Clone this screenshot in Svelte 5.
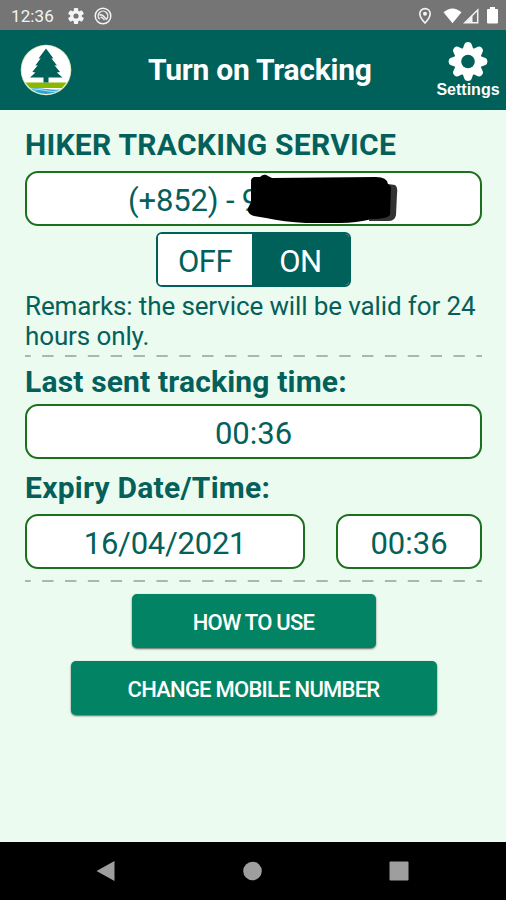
<script>
  let tracking = true;
  const countryCode = '(+852) - 9';
  const lastSent = '00:36';
  const expiryDate = '16/04/2021';
  const expiryTime = '00:36';

  const teeth = [0, 45, 90, 135, 180, 225, 270, 315];
</script>

<style>
  :global(body) {
    margin: 0;
    background: #ebfbef;
  }

  .screen {
    display: flex;
    flex-direction: column;
    width: 506px;
    height: 900px;
    overflow: hidden;
    background: #ebfbef;
    color: #04605a;
    font-family: Roboto, "Liberation Sans", sans-serif;
  }

  svg {
    display: block;
    flex: none;
  }

  .status {
    display: flex;
    align-items: center;
    height: 30px;
    padding: 1px 8px 0 11px;
    background: #757575;
    color: #f4f4f4;
    font-size: 17px;
    box-sizing: border-box;
  }

  .clock {
    width: 57px;
    letter-spacing: 0.1px;
  }

  .status-right {
    display: flex;
    align-items: center;
    margin-left: auto;
  }

  header {
    display: flex;
    align-items: center;
    height: 80px;
    padding-left: 20px;
    background: #00605a;
    color: #fff;
  }

  h1 {
    flex: 1;
    margin: 0 0 0 76px;
    font-size: 30px;
    line-height: 36px;
    font-weight: 700;
    letter-spacing: -0.25px;
    white-space: nowrap;
  }

  .settings {
    display: flex;
    flex-direction: column;
    align-items: center;
    width: 76px;
    font: 700 16px/18px "Liberation Sans", sans-serif;
  }

  main {
    flex: 1;
    display: flex;
    flex-direction: column;
    padding: 17px 24px 0 25px;
  }

  h2 {
    margin: 0;
    height: 44px;
    font-size: 30px;
    line-height: 36px;
    font-weight: 700;
    letter-spacing: 0.27px;
    white-space: nowrap;
  }

  h2.time {
    height: 40px;
    margin-top: 7px;
    letter-spacing: 0.17px;
  }

  h2.expiry {
    height: 44px;
    margin-top: 11px;
    letter-spacing: 0.25px;
  }

  .field {
    position: relative;
    display: flex;
    align-items: center;
    justify-content: center;
    height: 55px;
    padding-top: 3px;
    box-sizing: border-box;
    border: 2px solid #1c701c;
    border-radius: 13px;
    background: #fff;
    font-size: 31px;
  }

  .phone {
    justify-content: flex-start;
    padding-left: 101px;
    letter-spacing: -0.15px;
  }

  .redaction {
    position: absolute;
    left: 217px;
    top: 0;
    filter: blur(0.6px);
  }

  .toggle {
    display: flex;
    align-self: center;
    width: 195px;
    height: 55px;
    margin: 6px 0 4px;
    box-sizing: border-box;
    border: 2px solid #00605a;
    border-radius: 6px;
    overflow: hidden;
    background: #fff;
  }

  .toggle button {
    width: 94px;
    padding: 4px 0 0;
    border: 0;
    background: #fff;
    color: #00605a;
    font: 31px Roboto, sans-serif;
    letter-spacing: -0.5px;
  }

  .toggle button + button {
    flex: 1;
  }

  .toggle button.active {
    background: #00605a;
    color: #fff;
  }

  .remarks {
    margin: 0;
    height: 64px;
    font-size: 26px;
    line-height: 30px;
    letter-spacing: -0.12px;
    white-space: nowrap;
  }

  .row {
    display: flex;
    gap: 31px;
    margin-bottom: 11px;
  }

  .date {
    width: 280px;
    letter-spacing: -0.25px;
  }

  .hour {
    width: 146px;
  }

  .action {
    align-self: center;
    height: 54px;
    padding: 2px 0 0;
    border: 0;
    border-radius: 5px;
    background: #028464;
    box-shadow: 0 1px 2px rgba(0, 0, 0, 0.6);
    color: #fff;
    font: 500 22px Roboto, sans-serif;
    letter-spacing: -0.75px;
  }

  .how {
    width: 244px;
    margin-top: 12px;
  }

  .change {
    width: 366px;
    margin-top: 13px;
  }

  nav {
    display: flex;
    align-items: center;
    justify-content: space-between;
    height: 58px;
    padding: 0 97px 0 95px;
    box-sizing: border-box;
    background: #000;
  }
</style>

{#snippet divider()}
  <svg width="457" height="2" viewBox="0 0 457 2">
    <path d="M0 1H457" stroke="#a9b8ad" stroke-width="2" stroke-dasharray="11.4 11.45" stroke-dashoffset="5.7" />
  </svg>
{/snippet}

<div class="screen">
  <div class="status">
    <span class="clock">12:36</span>
    <svg width="16" height="18" viewBox="0 0 16 18">
      <g transform="translate(8 9)" fill="#f4f4f4">
        {#each [0, 60, 120] as angle}
          <rect x="-2.2" y="-8" width="4.4" height="16" rx="1" transform="rotate({angle})" />
        {/each}
        <circle r="5.7" />
        <circle r="2.6" fill="#757575" />
      </g>
    </svg>
    <svg width="18" height="18" viewBox="0 0 18 18" style:margin-left="10px" fill="none" stroke="#f4f4f4">
      <circle cx="9" cy="9" r="7.8" stroke-width="1.5" />
      <path d="M5.6 12.3A4.8 4.8 0 1 1 12.4 12.3" stroke-width="1.4" />
      <path d="M5.5 8.5C7.500 6.500 9 8.500 12.800 12.800M6.500 10.500C8 9.500 8.500 11 10.500 13" stroke-width="1.300" />
    </svg>
    <div class="status-right">
      <svg width="14" height="18" viewBox="0 0 14 18">
        <path d="M7 1.6C4 1.6 1.8 3.8 1.8 6.7 1.8 10.5 7 16 7 16s5.2-5.5 5.2-9.3C12.2 3.8 10 1.6 7 1.6Z" fill="none" stroke="#f4f4f4" stroke-width="1.6" />
        <circle cx="7" cy="6.7" r="2" fill="#f4f4f4" />
      </svg>
      <svg width="19" height="16" viewBox="0 0 19 16" style:margin-left="11px">
        <path d="M.5 4.3Q9.5-3.3 18.5 4.3L9.5 15.2Z" fill="#fff" />
      </svg>
      <svg width="16" height="16" viewBox="0 0 16 16" style:margin-left="1px">
        <path d="M1.8 14.8 14.7 2V14.8Z" fill="none" stroke="#f4f4f4" stroke-width="1.5" />
        <path d="M9.5 7V15H2Z" fill="#f4f4f4" />
      </svg>
      <svg width="11" height="17" viewBox="0 0 11 17" style:margin-left="8px">
        <path d="M3 0H8V2H10Q11 2 11 3V15.5Q11 16.5 10 16.5H1Q0 16.5 0 15.5V3Q0 2 1 2H3Z" fill="#fff" />
      </svg>
    </div>
  </div>

  <header>
    <svg width="52" height="52" viewBox="0 0 52 52">
      <clipPath id="badge"><circle cx="26" cy="26" r="24" /></clipPath>
      <circle cx="26" cy="26" r="25.3" fill="#d4e8b4" />
      <circle cx="26" cy="26" r="24.4" fill="#fff" />
      <g clip-path="url(#badge)">
        <path d="M0 38.5H52V44H0Z" fill="#8ab800" />
        <path d="M5 45.5Q15 43.5 26 45T47 45V52H5Z" fill="#2ba6d0" />
        <path d="M10 46.5Q20 44.5 26 46.5T44 46" fill="none" stroke="#d5f1f6" stroke-width="0.8" />
      </g>
      <path d="M26 4.500 33.500 14.500 31.300 14.300 37 21.500 34.500 21.300 40 28 36.800 28.500 42.500 33.500H28.500V38.500H23.500V33.500H10L15.500 28.500 12.300 28 17.700 21.300 15.300 21.500 20.700 14.300 18.500 14.500Z" fill="#00605a" />
    </svg>
    <h1>Turn on Tracking</h1>
    <div class="settings">
      <svg width="40" height="39" viewBox="-20 -19.5 40 39">
        {#each teeth as angle}
          <path d="M-5.500-12-3.500-17.500Q-2.800-19.400 0-19.400T3.500-17.500L5.500-12Z" fill="#fff" transform="rotate({angle})" />
        {/each}
        <circle r="14" fill="#fff" />
        <circle r="6.800" fill="#00605a" />
      </svg>
      Settings
    </div>
  </header>

  <main>
    <h2>HIKER TRACKING SERVICE</h2>
    <div class="field phone">
      {countryCode}
      <svg class="redaction" width="158" height="51" viewBox="0 0 158 51">
        <path d="M144 11 151 12Q154 14 153 21L152 42Q151 48 144 48L125 48 128 12Z" fill="#333" />
        <path d="M10 4 16 4Q20 0 24 3L28 5 132 4Q143 4 144 11L147 14 146 42Q143 46 128 46 112 50 96 50H62Q40 49 22 45L10 43Q3 41 4 35L7 29 7 8Q7 5 10 4Z" fill="#000" />
      </svg>
    </div>
    <div class="toggle">
      <button class:active={!tracking} on:click={() => (tracking = false)}>OFF</button>
      <button class:active={tracking} on:click={() => (tracking = true)}>ON</button>
    </div>
    <p class="remarks">Remarks: the service will be valid for 24<br />hours only.</p>
    {@render divider()}

    <h2 class="time">Last sent tracking time:</h2>
    <div class="field">{lastSent}</div>

    <h2 class="expiry">Expiry Date/Time:</h2>
    <div class="row">
      <div class="field date">{expiryDate}</div>
      <div class="field hour">{expiryTime}</div>
    </div>
    {@render divider()}

    <button class="action how">HOW TO USE</button>
    <button class="action change">CHANGE MOBILE NUMBER</button>
  </main>

  <nav>
    <svg width="20" height="22" viewBox="0 0 20 22">
      <path d="M1.5 11 19.5 1V21Z" fill="#9e9e9e" />
    </svg>
    <svg width="20" height="20" viewBox="0 0 20 20">
      <circle cx="10.5" cy="10" r="9.3" fill="#9e9e9e" />
    </svg>
    <svg width="20" height="20" viewBox="0 0 20 20">
      <rect x=".5" y=".5" width="19" height="19" rx="1" fill="#9e9e9e" />
    </svg>
  </nav>
</div>
